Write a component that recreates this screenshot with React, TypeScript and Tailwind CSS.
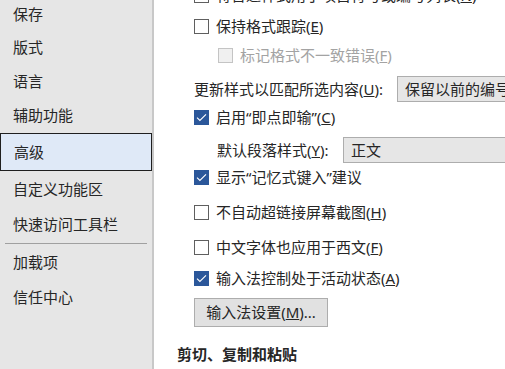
import React from 'react';

const font = { fontFamily: '"Noto Sans", "Noto Sans CJK SC", sans-serif' };

const navItems = [
  { label: '保存', h: 'h-[33px]' },
  { label: '版式', h: 'h-[33px]' },
  { label: '语言', h: 'h-[34px]' },
  { label: '辅助功能', h: 'h-[34px]' },
  { label: '高级', h: 'h-[38px]', active: true },
  { label: '自定义功能区', h: 'h-[36px]' },
  { label: '快速访问工具栏', h: 'h-[34px]' },
];

const navItems2 = [
  { label: '加载项', h: 'h-[34px]' },
  { label: '信任中心', h: 'h-[36px]' },
];

const CheckBox: React.FC<{ checked?: boolean; disabled?: boolean }> = ({ checked, disabled }) => {
  if (checked) {
    return (
      <span className="flex h-[15px] w-[15px] shrink-0 items-center justify-center bg-[#2b579a]">
        <svg width="11" height="9" viewBox="0 0 11 9" fill="none">
          <path d="M1 4.6 L3.9 7.5 L10 1.3" stroke="#fff" strokeWidth="1.1" />
        </svg>
      </span>
    );
  }
  if (disabled) {
    return <span className="h-[15px] w-[15px] shrink-0 border border-[#c4c4c4] bg-[#f0f0f0]" />;
  }
  return <span className="h-[15px] w-[15px] shrink-0 border border-[#5f5f5f] bg-white" />;
};

const CheckRow: React.FC<{ checked?: boolean; mt: string; children: React.ReactNode }> = ({ checked, mt, children }) => (
  <div className={`flex h-[20px] items-center gap-[7px] ${mt}`}>
    <CheckBox checked={checked} />
    <span className="whitespace-nowrap">{children}</span>
  </div>
);

export default function App() {
  return (
    <div className="flex h-[369px] w-[505px] overflow-hidden bg-white text-[15px] text-[#262626]" style={font}>
      {/* left nav */}
      <div className="w-[154px] shrink-0 border-r-2 border-[#c8c8c8] bg-[#e6e6e6]">
        <div className="-mt-[2px] flex flex-col">
          {navItems.map((item) => (
            <div
              key={item.label}
              className={`flex items-center pl-[13px] ${item.h} ${
                item.active ? 'mt-[1px] border border-[#1f1f1f] bg-[#dfe9f7]' : ''
              }`}
            >
              {item.label}
            </div>
          ))}
          <div className="flex h-[4px] items-center px-[5px]">
            <div className="h-px w-full bg-[#a0a0a0]" />
          </div>
          {navItems2.map((item) => (
            <div key={item.label} className={`flex items-center pl-[13px] ${item.h}`}>
              {item.label}
            </div>
          ))}
        </div>
      </div>

      {/* right panel */}
      <div className="min-w-0 flex-1 overflow-hidden">
        <div className="-mt-[15px] flex flex-col pl-[40px]">
          <CheckRow mt="">
            将普通样式用于项目符号或编号列表(<u>N</u>)
          </CheckRow>
          <CheckRow mt="mt-[11px]">
            保持格式跟踪(<u>E</u>)
          </CheckRow>
          <div className="mt-[9px] flex h-[20px] items-center gap-[7px] pl-[24px] text-[#a3a3a3]">
            <CheckBox disabled />
            <span className="whitespace-nowrap">
              标记格式不一致错误(<u>F</u>)
            </span>
          </div>
          <div className="mt-[11px] flex h-[26px] items-center">
            <span className="w-[203px] shrink-0 whitespace-nowrap">
              更新样式以匹配所选内容(<u>U</u>):
            </span>
            <div className="flex h-[26px] w-[140px] shrink-0 items-center overflow-hidden whitespace-nowrap border border-[#adadad] bg-[#e6e6e6] pl-[7px]">
              保留以前的编号和项目符号样式
            </div>
          </div>
          <CheckRow checked mt="mt-[5px]">
            启用“即点即输”(<u>C</u>)
          </CheckRow>
          <div className="mt-[10px] flex h-[26px] items-center pl-[23px]">
            <span className="w-[126px] shrink-0 whitespace-nowrap">
              默认段落样式(<u>Y</u>):
            </span>
            <div className="flex h-[26px] w-[200px] shrink-0 items-center border border-[#adadad] bg-[#e6e6e6] pl-[7px]">
              正文
            </div>
          </div>
          <CheckRow checked mt="mt-[4px]">
            显示“记忆式键入”建议
          </CheckRow>
          <CheckRow mt="mt-[15px]">
            不自动超链接屏幕截图(<u>H</u>)
          </CheckRow>
          <CheckRow mt="mt-[15px]">
            中文字体也应用于西文(<u>F</u>)
          </CheckRow>
          <CheckRow checked mt="mt-[11px]">
            输入法控制处于活动状态(<u>A</u>)
          </CheckRow>
          <div className="mt-[10px]">
            <button className="h-[29px] w-[134px] border border-[#adadad] bg-[#e1e1e1] text-[15px] text-[#262626]">
              输入法设置(<u>M</u>)...
            </button>
          </div>
        </div>
        <div className="mt-[17px] flex h-[20px] items-center pl-[23px] font-bold">剪切、复制和粘贴</div>
      </div>
    </div>
  );
}
